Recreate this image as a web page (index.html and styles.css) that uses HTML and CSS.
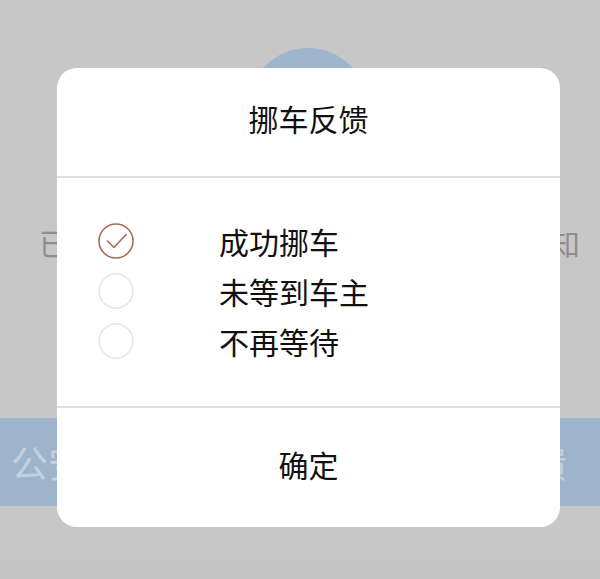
FILE: index.html
```html
<!DOCTYPE html>
<html lang="zh-CN">
<head>
<meta charset="utf-8">
<title>挪车反馈</title>
<link rel="stylesheet" href="styles.css">
</head>
<body>
<div class="page">
  <div class="avatar"></div>
  <p class="notice"><span>已经</span><span>通知</span></p>
  <div class="band"><span>公安报警</span><span>挪车反馈</span></div>
  <div class="strip"></div>
  <div class="strip-dark"></div>
</div>

<div class="modal">
  <div class="modal-header">挪车反馈</div>
  <div class="modal-body">
    <div class="option">
      <svg class="radio" viewBox="0 0 36 36" width="36" height="36">
        <circle cx="18" cy="18" r="17" fill="none" stroke="#a9685c" stroke-width="1.6"/>
        <polyline points="9.5,18 16,24.5 28,11.5" fill="none" stroke="#a9685c" stroke-width="1.6" stroke-linecap="round" stroke-linejoin="round"/>
      </svg>
      <span class="label">成功挪车</span>
    </div>
    <div class="option">
      <svg class="radio" viewBox="0 0 36 36" width="36" height="36">
        <circle cx="18" cy="18" r="17" fill="none" stroke="#e6e6e6" stroke-width="1.6"/>
      </svg>
      <span class="label">未等到车主</span>
    </div>
    <div class="option">
      <svg class="radio" viewBox="0 0 36 36" width="36" height="36">
        <circle cx="18" cy="18" r="17" fill="none" stroke="#e6e6e6" stroke-width="1.6"/>
      </svg>
      <span class="label">不再等待</span>
    </div>
  </div>
  <div class="modal-footer">确定</div>
</div>
</body>
</html>
```

FILE: styles.css
```css
html, body {
  margin: 0;
  padding: 0;
}

body {
  width: 600px;
  height: 579px;
  overflow: hidden;
  background: #c7c7c7;
  font-family: "Noto Sans CJK SC", "Noto Sans", sans-serif;
  position: relative;
}

.page {
  display: flex;
  flex-direction: column;
  padding-top: 48px;
}

.avatar {
  width: 120px;
  height: 120px;
  border-radius: 50%;
  background: #9eb5cb;
  align-self: center;
  margin-left: 16px;
}

.notice {
  margin: 59px 0 0 0;
  padding: 0 20px 0 39px;
  height: 30px;
  line-height: 30px;
  font-size: 30px;
  color: #8e8e8e;
  display: flex;
  justify-content: space-between;
  white-space: nowrap;
}

.band {
  margin-top: 161px;
  height: 88px;
  background: #9db4cb;
  display: flex;
  justify-content: space-between;
  align-items: center;
  padding: 0 33px 0 11px;
  font-size: 37px;
  color: #c3d1de;
}

.strip {
  height: 54px;
  background: #c7c7c7;
}

.strip-dark {
  height: 19px;
  background: #c3c3c3;
}

.modal {
  position: absolute;
  left: 57px;
  top: 68px;
  width: 503px;
  height: 459px;
  background: #fff;
  border-radius: 20px;
  display: flex;
  flex-direction: column;
  overflow: hidden;
  color: #111;
}

.modal-header {
  height: 100px;
  padding-bottom: 8px;
  display: flex;
  align-items: center;
  justify-content: center;
  font-size: 30px;
  line-height: 30px;
  border-bottom: 2px solid #dfdfdf;
}

.modal-body {
  padding: 38px 0 40px 41px;
  display: flex;
  flex-direction: column;
  border-bottom: 2px solid #dfdfdf;
}

.option {
  height: 50px;
  display: flex;
  align-items: center;
  gap: 85px;
}

.radio {
  flex: none;
  display: block;
}

.label {
  font-size: 30px;
  line-height: 30px;
}

.modal-footer {
  flex: 1;
  padding-bottom: 7px;
  display: flex;
  align-items: center;
  justify-content: center;
  font-size: 30px;
  line-height: 30px;
}
```
